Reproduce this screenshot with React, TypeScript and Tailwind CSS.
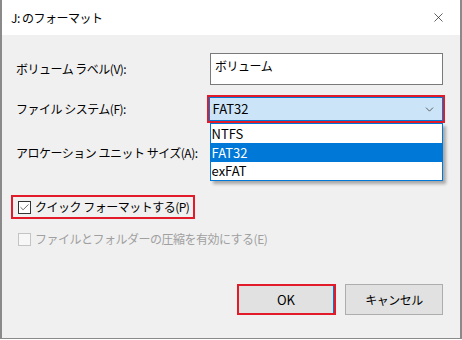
import { Check, ChevronDown, X } from 'lucide-react';

const font = "font-['Noto_Sans_CJK_JP','Noto_Sans',sans-serif]";

export default function App() {
  return (
    <div className={`w-[462px] h-[340px] bg-white text-[12px] leading-[16px] tracking-[-0.5px] text-black ${font}`}>
      <div className="w-[462px] h-[339px] flex flex-col border-x-2 border-b border-[#8a8a8a]">
        {/* Title bar */}
        <div className="h-[35px] bg-white flex items-center justify-between pl-[9px] pr-[14px] shrink-0">
          <span>J: のフォーマット</span>
          <X size={15} strokeWidth={1.1} className="text-[#1a1a1a]" />
        </div>

        {/* Body */}
        <div className="flex-1 bg-[#f0f0f0] pt-[18px] pl-[14px] pr-[15px] flex flex-col">
          {/* Volume label */}
          <div className="flex items-center">
            <span className="w-[194px]">ボリューム ラベル(V):</span>
            <div className="w-[233px] h-[32px] bg-white border border-[#7a7a7a] px-[4px] pt-[4px]">
              ボリューム
            </div>
          </div>

          {/* File system */}
          <div className="flex items-center mt-[10px]">
            <span className="w-[191px]">ファイル システム(F):</span>
            <div className="relative w-[239px] h-[28px] border-2 border-[#e21b2b] tracking-normal text-[13px]">
              <div className="h-full border border-[#0078d7] bg-[#cce4f7] flex items-center justify-between pl-[3px] pr-[6px]">
                <span>FAT32</span>
                <ChevronDown size={13} strokeWidth={1.5} className="text-[#444]" />
              </div>
              {/* Dropdown list */}
              <div className="absolute left-[1px] top-[26px] w-[233px] bg-white border border-[#0078d7] shadow-[3px_3px_3px_rgba(0,0,0,0.3)] z-10">
                <div className="h-[19px] flex items-center pl-[1px]">NTFS</div>
                <div className="h-[19px] flex items-center pl-[1px] bg-[#0078d7] text-white">FAT32</div>
                <div className="h-[18px] flex items-center pl-[1px]">exFAT</div>
              </div>
            </div>
          </div>

          {/* Allocation unit */}
          <div className="mt-[22px]">アロケーション ユニット サイズ(A):</div>

          {/* Quick format */}
          <div className="mt-[34px] -ml-[5px] w-fit h-[24px] border-2 border-[#e21b2b] flex items-center pl-[5px] pr-[4px] gap-[4px] whitespace-nowrap">
            <div className="w-[13px] h-[13px] shrink-0 border border-[#333] bg-white flex items-center justify-center">
              <Check size={11} strokeWidth={1.6} className="text-[#333]" />
            </div>
            <span>クイック フォーマットする(P)</span>
          </div>

          {/* Compression (disabled) */}
          <div className="mt-[12px] flex items-center gap-[4px] pl-[2px] text-[#a0a0a0] whitespace-nowrap">
            <div className="w-[13px] h-[13px] shrink-0 border border-[#c4c4c4] bg-[#f7f7f7]" />
            <span>ファイルとフォルダーの圧縮を有効にする(E)</span>
          </div>

          {/* Buttons */}
          <div className="mt-auto mb-[23px] flex justify-end gap-[9px] pr-[2px]">
            <div className="w-[99px] h-[31px] border-2 border-[#e21b2b] bg-[#e1e1e1] tracking-normal text-[13px]">
              <div className="w-full h-full border-r border-[#0078d7] flex items-center justify-center">OK</div>
            </div>
            <div className="w-[98px] h-[31px] border border-[#adadad] bg-[#e1e1e1] flex items-center justify-center">
              キャンセル
            </div>
          </div>
        </div>
      </div>
    </div>
  );
}
